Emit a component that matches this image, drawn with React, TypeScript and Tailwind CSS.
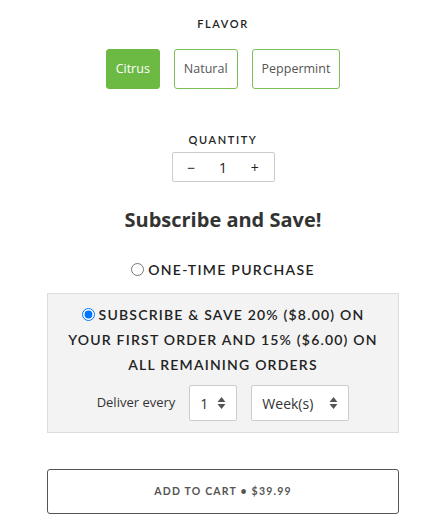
import { useState } from "react";

const flavors = ["Citrus", "Natural", "Peppermint"];

function UpDown() {
    return (
        <svg width="9" height="14" viewBox="0 0 9 14" className="text-[#555]">
            <path d="M4.5 1 L8.5 6 L0.5 6 Z" fill="currentColor" />
            <path d="M4.5 13 L8.5 8 L0.5 8 Z" fill="currentColor" />
        </svg>
    );
}

export default function App() {
    const [flavor, setFlavor] = useState("Citrus");
    const [qty, setQty] = useState(1);
    const [plan, setPlan] = useState("subscribe");

    return (
        <div className="min-h-screen bg-white font-['Open_Sans',sans-serif] text-[#333]">
            <div className="ml-[47px] w-[352px] flex flex-col items-center pt-[16px]">
                {/* Flavor */}
                <div className="h-4 leading-4 text-[11px] font-semibold tracking-[1.6px] text-[#222] font-['Lato',sans-serif]">
                    FLAVOR
                </div>
                <div className="mt-[17px] flex gap-[14px]">
                    {flavors.map((f) => (
                        <button
                            key={f}
                            onClick={() => setFlavor(f)}
                            className={
                                f === flavor
                                    ? "h-10 px-[9px] rounded-[3px] border border-[#6cb944] bg-[#6cb944] text-white text-[12.5px]"
                                    : "h-10 px-[9px] rounded-[3px] border border-[#7cc055] bg-white text-[#555] text-[12.5px]"
                            }
                        >
                            {f}
                        </button>
                    ))}
                </div>

                {/* Quantity */}
                <div className="mt-[43px] h-4 leading-4 text-[11px] font-semibold tracking-[1.6px] text-[#222] font-['Lato',sans-serif]">
                    QUANTITY
                </div>
                <div className="mt-[4px] h-[30px] w-[103px] border border-[#ccc] rounded-[2px] grid grid-cols-3 items-center text-[14px] text-[#222]">
                    <button onClick={() => setQty(Math.max(1, qty - 1))} className="text-center pl-[4px] text-[#222]">−</button>
                    <span className="text-center">{qty}</span>
                    <button onClick={() => setQty(qty + 1)} className="text-center pr-[4px] text-[#222]">+</button>
                </div>

                {/* Heading */}
                <h2 className="mt-[24px] h-7 leading-7 text-[20px] font-bold text-[#333]">Subscribe and Save!</h2>

                {/* One-time */}
                <label className="mt-[25px] h-5 flex items-center gap-[4px] text-[14px] font-semibold tracking-[1.3px] text-[#222] font-['Lato',sans-serif]">
                    <input
                        type="radio"
                        name="plan"
                        checked={plan === "once"}
                        onChange={() => setPlan("once")}
                        className="w-[13px] h-[13px] m-0"
                    />
                    ONE-TIME PURCHASE
                </label>

                {/* Subscribe box */}
                <div className="mt-[14px] w-full h-[140px] bg-[#f3f3f3] border border-[#dcdcdc] pt-[8px] px-[10px] flex flex-col items-center">
                    <p className="text-center leading-[25px] text-[14px] font-semibold tracking-[1.2px] text-[#222] font-['Lato',sans-serif]">
                        <input
                            type="radio"
                            name="plan"
                            checked={plan === "subscribe"}
                            onChange={() => setPlan("subscribe")}
                            className="w-[13px] h-[13px] m-0 mr-[4px] align-[-1px]"
                        />
                        SUBSCRIBE &amp; SAVE 20% ($8.00) ON YOUR FIRST ORDER AND 15% ($6.00) ON ALL REMAINING ORDERS
                    </p>
                    <div className="mt-[8px] flex items-center gap-[14px] text-[13px] text-[#333]">
                        <span>Deliver every</span>
                        <div className="h-9 w-[48px] bg-white border border-[#ccc] rounded-[2px] flex items-center justify-between pl-[10px] pr-[10px] text-[14px]">
                            <span>1</span>
                            <UpDown />
                        </div>
                        <div className="h-9 w-[98px] bg-white border border-[#ccc] rounded-[2px] flex items-center justify-between pl-[10px] pr-[10px] text-[14px]">
                            <span>Week(s)</span>
                            <UpDown />
                        </div>
                    </div>
                </div>

                {/* Add to cart */}
                <button className="mt-[36px] w-full h-[45px] border border-[#555] rounded-[3px] text-[10.5px] font-bold tracking-[1.2px] text-[#555] font-['Lato',sans-serif]">
                    ADD TO CART • $39.99
                </button>
            </div>
        </div>
    );
}
